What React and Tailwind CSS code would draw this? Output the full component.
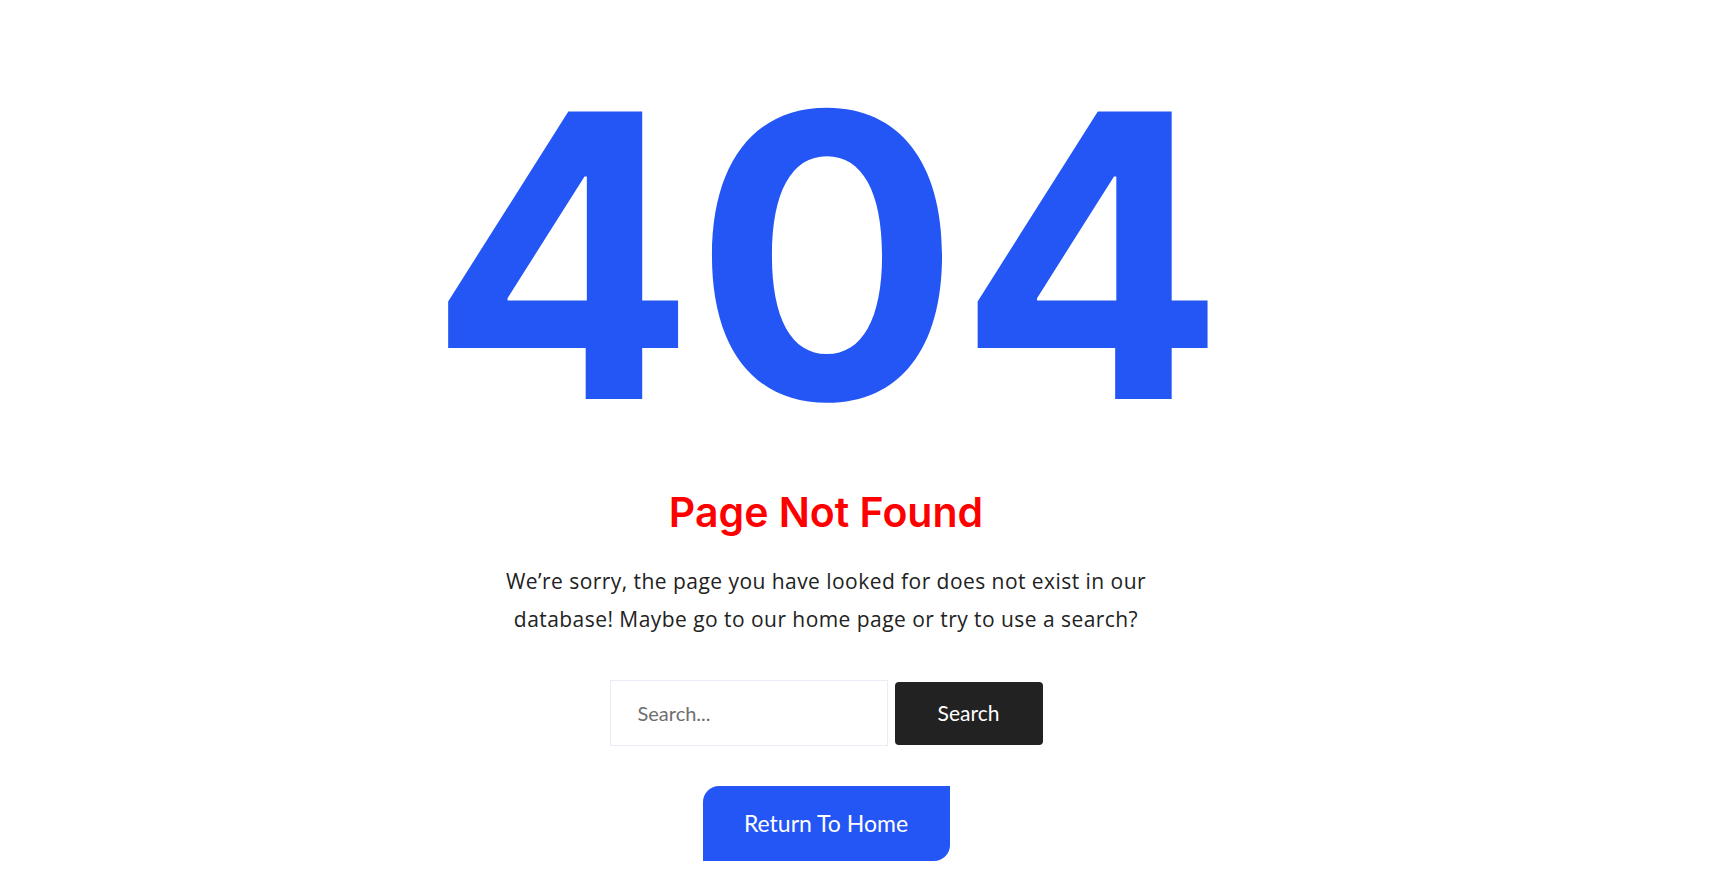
export default function App() {
  return (
    <div className="min-h-screen w-full bg-white flex flex-col items-center pr-[58px]">
      <h1 className="mt-[58px] font-[Inter,sans-serif] text-[395px] font-bold leading-none tracking-[-2px] text-[#2356f5]">
        404
      </h1>

      <h2 className="mt-[39px] font-[Inter,sans-serif] text-[41px] font-semibold leading-none text-[#ff0000]">
        Page Not Found
      </h2>

      <p className="mt-[29px] w-[700px] text-center font-['Open_Sans',Lato,sans-serif] text-[21px] leading-[38px] tracking-[0.45px] text-[#222222]">
        We’re sorry, the page you have looked for does not exist in our database! Maybe go to our home page or try to use a search?
      </p>

      {/* search */}
      <form className="mt-[42px] flex items-center gap-[7px]" onSubmit={e => e.preventDefault()}>
        <input
          type="text"
          placeholder="Search..."
          className="h-[66px] w-[278px] border border-[#ebebf5] bg-white px-[27px] font-[Lato,'Open_Sans',sans-serif] text-[20px] text-[#222] placeholder:text-[#6e6e6e] outline-none"
        />
        <button
          type="submit"
          className="h-[63px] w-[148px] rounded-[4px] bg-[#222222] font-[Lato,'Open_Sans',sans-serif] text-[21px] text-white"
        >
          Search
        </button>
      </form>

      <a
        href="#"
        className="mt-[40px] flex h-[75px] w-[247px] items-center justify-center rounded-tl-[16px] rounded-br-[16px] bg-[#2356f5] font-[Lato,'Open_Sans',sans-serif] text-[23px] text-white"
      >
        Return To Home
      </a>
    </div>
  );
}
